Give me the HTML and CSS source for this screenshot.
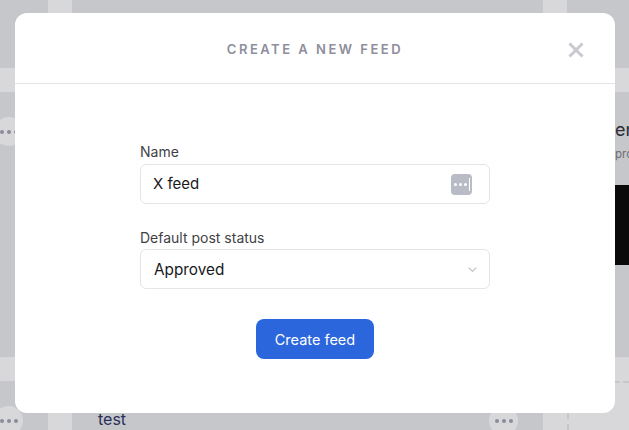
FILE: index.html
```html
<!DOCTYPE html>
<html lang="en">
<head>
    <meta charset="UTF-8">
    <meta name="viewport" content="width=device-width, initial-scale=1.0">
    <title>Create a new feed</title>
    <link rel="stylesheet" href="styles.css">
</head>
<body>
    <div class="board">
        <div class="card"></div>
        <div class="card"></div>
        <div class="card"></div>
        <div class="card card-row card-end">
            <span class="more"><i></i><i></i><i></i></span>
        </div>
        <div class="card"></div>
        <div class="card card-feed">
            <p class="feed-title">en</p>
            <p class="feed-sub">pro</p>
            <div class="feed-media"></div>
        </div>
        <div class="card card-row card-end">
            <span class="more"><i></i><i></i><i></i></span>
        </div>
        <div class="card card-row card-test">
            <span class="test-name">test</span>
            <span class="more"><i></i><i></i><i></i></span>
        </div>
        <div class="card-add"></div>
    </div>

    <div class="overlay">
        <div class="modal">
            <div class="modal-header">
                <h2>Create a new feed</h2>
                <button class="close" aria-label="Close">
                    <svg width="16" height="16" viewBox="0 0 16 16">
                        <path d="M1.5 1.5l13 13M14.5 1.5l-13 13" fill="none" stroke="#c9cad0" stroke-width="3"/>
                    </svg>
                </button>
            </div>
            <div class="modal-body">
                <div class="form-group">
                    <label for="name">Name</label>
                    <div class="field">
                        <input type="text" id="name" value="X feed">
                        <span class="pass-icon"><i></i><i></i><i></i><b></b></span>
                    </div>
                </div>
                <div class="form-group">
                    <label>Default post status</label>
                    <div class="field field-select">
                        <span>Approved</span>
                        <svg width="9" height="5" viewBox="0 0 9 5">
                            <path d="M.7.7l3.8 3.6L8.3.7" fill="none" stroke="#b9bac2" stroke-width="1.1"/>
                        </svg>
                    </div>
                </div>
                <button class="submit">Create feed</button>
            </div>
        </div>
    </div>
</body>
</html>
```

FILE: styles.css
```css
* {
    box-sizing: border-box;
}

html, body {
    margin: 0;
    height: 430px;
    overflow: hidden;
}

body {
    position: relative;
    font-family: Inter, "Liberation Sans", sans-serif;
    background-color: #d8d8da;
}

/* the feed board behind the dialog */
.board {
    display: grid;
    grid-template-columns: 48px 471px 62px;
    grid-template-rows: 68px 265px 49px;
    gap: 24px;
    height: 430px;
}

.card {
    background-color: #c6c7cb;
    overflow: hidden;
}

.card-row {
    display: flex;
    justify-content: space-between;
    align-items: flex-start;
}

.card-end {
    justify-content: flex-end;
    padding: 25px 25px 0 0;
}

.more {
    display: flex;
    align-items: center;
    justify-content: center;
    gap: 3px;
    width: 29px;
    height: 29px;
    border-radius: 50%;
    background-color: #d8d8da;
    flex-shrink: 0;
}

.more i {
    width: 4px;
    height: 4px;
    border-radius: 50%;
    background-color: #8b8c9b;
}

.card-test {
    padding: 25px 25px 0 26px;
}

.test-name {
    font-size: 16px;
    line-height: 26px;
    color: #28305a;
}

.card-feed {
    padding-top: 26px;
}

.feed-title {
    margin: 0 0 0 48px;
    font-size: 18px;
    line-height: 24px;
    color: #2b2b30;
}

.feed-sub {
    margin: 4px 0 0 48px;
    font-size: 11.5px;
    line-height: 16px;
    color: #6d6e76;
}

.feed-media {
    height: 80px;
    margin-top: 23px;
    background-color: #0a0a0a;
}

.card-add {
    border-top: 2px dashed #c6c7cb;
    border-left: 2px dashed #c6c7cb;
}

.overlay {
    position: absolute;
    top: 0;
    left: 0;
    width: 629px;
    height: 430px;
    padding: 13px 14px 17px 15px;
}

.modal {
    height: 400px;
    background-color: #fff;
    border-radius: 12px;
}

.modal-header {
    position: relative;
    height: 71px;
    padding-top: 2px;
    display: flex;
    align-items: center;
    justify-content: center;
    border-bottom: 1px solid #e4e4e7;
}

.modal-header h2 {
    margin: 0;
    font-size: 13px;
    font-weight: 600;
    letter-spacing: 2.5px;
    text-transform: uppercase;
    color: #8e8e9c;
}

.close {
    position: absolute;
    top: 29px;
    right: 31px;
    width: 16px;
    height: 16px;
    padding: 0;
    border: none;
    background: none;
    line-height: 0;
}

.modal-body {
    width: 350px;
    margin: 0 auto;
    padding-top: 59px;
    display: flex;
    flex-direction: column;
    align-items: center;
}

.form-group {
    width: 100%;
    margin-bottom: 25px;
}

label {
    display: block;
    font-size: 14px;
    line-height: 17px;
    margin-bottom: 4px;
    color: #3f3f46;
}

.form-group + .form-group label {
    margin-bottom: 3px;
}

.field {
    display: flex;
    align-items: center;
    justify-content: space-between;
    height: 40px;
    padding: 0 17px 0 12px;
    border: 1px solid #e5e5e8;
    border-radius: 6px;
    font-size: 15px;
    color: #18181b;
}

.field input {
    flex: 1;
    min-width: 0;
    padding: 0 0 2px;
    border: none;
    outline: none;
    font: inherit;
    color: inherit;
}

.pass-icon {
    display: flex;
    align-items: center;
    justify-content: center;
    gap: 2px;
    width: 21px;
    height: 21px;
    border-radius: 4px;
    background-color: #b9bbc6;
}

.pass-icon i {
    width: 3px;
    height: 3px;
    border-radius: 50%;
    background-color: #fff;
}

.pass-icon b {
    width: 1px;
    height: 13px;
    background-color: #fff;
}

.field-select {
    padding: 0 12px 0 13px;
    font-size: 15.3px;
}

.submit {
    width: 118px;
    height: 40px;
    margin-top: 5px;
    border: none;
    border-radius: 8px;
    background-color: #2b66dc;
    color: #fff;
    font-family: inherit;
    font-size: 14.5px;
    cursor: pointer;
}
```
